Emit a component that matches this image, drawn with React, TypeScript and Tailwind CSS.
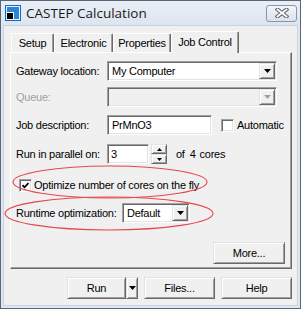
import React from "react";

const raised =
  "border border-t-[#e3e3e3] border-l-[#e3e3e3] border-r-[#696969] border-b-[#696969] shadow-[inset_1px_1px_0_#fff,inset_-1px_-1px_0_#a0a0a0] bg-[#f0f0f0]";
const sunken =
  "border border-t-[#a0a0a0] border-l-[#a0a0a0] border-r-white border-b-white shadow-[inset_1px_1px_0_#696969,inset_-1px_-1px_0_#e3e3e3]";

function DownArrow({ disabled = false }: { disabled?: boolean }) {
  return (
    <svg width="7" height="4" viewBox="0 0 7 4">
      <polygon points="0,0 7,0 3.5,4" fill={disabled ? "#a0a0a0" : "#000"} />
    </svg>
  );
}

function Combo({ value, className, disabled = false }: { value: string; className: string; disabled?: boolean }) {
  return (
    <div className={`${sunken} ${className} ${disabled ? "bg-[#f0f0f0]" : "bg-white"} flex h-[20px] p-px`}>
      <span className="flex-1 pl-[3px] leading-[16px] whitespace-nowrap">{value}</span>
      <div className={`${raised} w-[16px] h-[16px] flex items-center justify-center`}>
        <DownArrow disabled={disabled} />
      </div>
    </div>
  );
}

function CheckBox({ checked = false }: { checked?: boolean }) {
  return (
    <div className={`${sunken} bg-white w-[13px] h-[13px] flex items-center justify-center`}>
      {checked && (
        <svg width="7" height="7" viewBox="0 0 7 7">
          <polyline points="0.5,3.2 2.5,5.3 6.5,1" fill="none" stroke="#000" strokeWidth="1.7" />
        </svg>
      )}
    </div>
  );
}

function Tab({ label, active = false, className }: { label: string; active?: boolean; className: string }) {
  return (
    <div
      className={`${className} flex items-center justify-center rounded-t-[2px] border-l border-t border-l-white border-t-white border-r border-r-[#696969] shadow-[inset_-1px_0_0_#a0a0a0] bg-[#f0f0f0] ${
        active ? "relative z-10 h-[22px] -mb-px" : "h-[19px]"
      }`}
    >
      {label}
    </div>
  );
}

function Button({ label, className }: { label: string; className: string }) {
  return <div className={`${raised} ${className} h-[22px] flex items-center justify-center`}>{label}</div>;
}

function AppIcon() {
  return (
    <svg width="16" height="16" viewBox="0 0 16 16">
      <rect x="0" y="0" width="16" height="16" fill="#1c68b8" />
      <rect x="1" y="1" width="14" height="14" fill="#e8f2fc" />
      <rect x="2" y="2" width="12" height="12" fill="#2a86d6" />
      <rect x="2" y="7" width="7" height="7" fill="#fff" />
      <rect x="2" y="8" width="6" height="6" fill="#000" />
    </svg>
  );
}

export default function App() {
  return (
    <div className="relative w-[301px] h-[309px] border border-[#5b6573] bg-[#dfe7f0] flex flex-col font-['Liberation_Sans',Arial,sans-serif] text-[11px] tracking-[-0.25px] text-black">
      {/* title bar */}
      <div className="h-[24px] flex items-center pl-[4px] bg-gradient-to-b from-[#e9eff6] to-[#dce5ef]">
        <AppIcon />
        <span className="ml-[5px] text-[13.5px] tracking-normal text-[#1a1a1a] font-['Open_Sans',sans-serif]">CASTEP Calculation</span>
        <div className="ml-auto mr-[3px] w-[31px] h-[17px] rounded-[3px] border border-[#8b95a3] bg-gradient-to-b from-[#f3f6fa] to-[#dbe2ea] flex items-center justify-center">
          <svg width="14" height="10" viewBox="0 0 14 10">
            <path d="M2.5 1.5L11.5 8.5M11.5 1.5L2.5 8.5" stroke="#5d6573" strokeWidth="4" strokeLinecap="square" />
            <path d="M2.5 1.5L11.5 8.5M11.5 1.5L2.5 8.5" stroke="#fff" strokeWidth="1.8" strokeLinecap="square" />
          </svg>
        </div>
      </div>

      {/* client area */}
      <div className="flex-1 mx-[2px] mb-[2px] border border-[#c5d4e5] bg-[#f0f0f0] flex flex-col pl-[6px] pr-[5px] pt-[5px]">
        <div className="h-[21px] flex items-end pl-px">
          <Tab label="Setup" className="w-[43px]" />
          <Tab label="Electronic" className="w-[59px]" />
          <Tab label="Properties" className="w-[58px]" />
          <Tab label="Job Control" className="w-[68px]" active />
        </div>

        <div className="h-[217px] border border-t-white border-l-white border-r-[#696969] border-b-[#696969] shadow-[inset_-1px_-1px_0_#a0a0a0] flex flex-col pl-[5px] pr-[6px] pt-[8px]">
          <div className="flex items-center h-[20px]">
            <span className="w-[91px]">Gateway location:</span>
            <Combo value="My Computer" className="w-[170px]" />
          </div>
          <div className="flex items-center h-[20px] mt-[6px]">
            <span className="w-[91px] text-[#a0a0a0]">Queue:</span>
            <Combo value="" className="w-[170px]" disabled />
          </div>
          <div className="flex items-center h-[20px] mt-[8px]">
            <span className="w-[91px]">Job description:</span>
            <div className={`${sunken} bg-white w-[105px] h-[20px] flex items-center pl-[4px]`}>PrMnO3</div>
            <div className="ml-[9px]">
              <CheckBox />
            </div>
            <span className="ml-[3px]">Automatic</span>
          </div>
          <div className="flex items-center h-[20px] mt-[9px]">
            <span className="w-[91px]">Run in parallel on:</span>
            <div className={`${sunken} bg-white w-[42px] h-[20px] flex items-center pl-[3px]`}>3</div>
            <div className="ml-[2px] w-[16px] h-[20px] flex flex-col">
              <div className={`${raised} h-[10px] flex items-center justify-center`}>
                <svg width="5" height="3" viewBox="0 0 5 3">
                  <polygon points="2.5,0 5,3 0,3" fill="#000" />
                </svg>
              </div>
              <div className={`${raised} h-[10px] flex items-center justify-center`}>
                <svg width="5" height="3" viewBox="0 0 5 3">
                  <polygon points="0,0 5,0 2.5,3" fill="#000" />
                </svg>
              </div>
            </div>
            <span className="ml-[9px]">of</span>
            <span className="ml-[5px]">4</span>
            <span className="ml-[4px]">cores</span>
          </div>
          <div className="flex items-center h-[20px] mt-[11px]">
            <div className="ml-[3px]">
              <CheckBox checked />
            </div>
            <span className="ml-[2px]">Optimize number of cores on the fly</span>
          </div>
          <div className="flex items-center h-[20px] mt-[8px]">
            <span className="w-[106px]">Runtime optimization:</span>
            <Combo value="Default" className="w-[68px]" />
          </div>
          <div className="flex justify-end mt-[19px]">
            <Button label="More..." className="w-[72px]" />
          </div>
        </div>

        <div className="flex justify-end mt-[8px]">
          <Button label="Run" className="w-[59px]" />
          <div className={`${raised} w-[12px] h-[22px] flex items-center justify-center`}>
            <DownArrow />
          </div>
          <Button label="Files..." className="w-[71px] ml-[6px]" />
          <Button label="Help" className="w-[71px] ml-[6px]" />
        </div>
      </div>

      {/* red annotation ellipses */}
      <svg className="absolute left-[-1px] top-[-1px] pointer-events-none" width="301" height="309" viewBox="0 0 301 309">
        <ellipse cx="110" cy="182" rx="97" ry="16" fill="none" stroke="#e6474c" strokeWidth="1.1" />
        <ellipse cx="109" cy="213.5" rx="104" ry="16.5" fill="none" stroke="#e6474c" strokeWidth="1.1" />
      </svg>
    </div>
  );
}
